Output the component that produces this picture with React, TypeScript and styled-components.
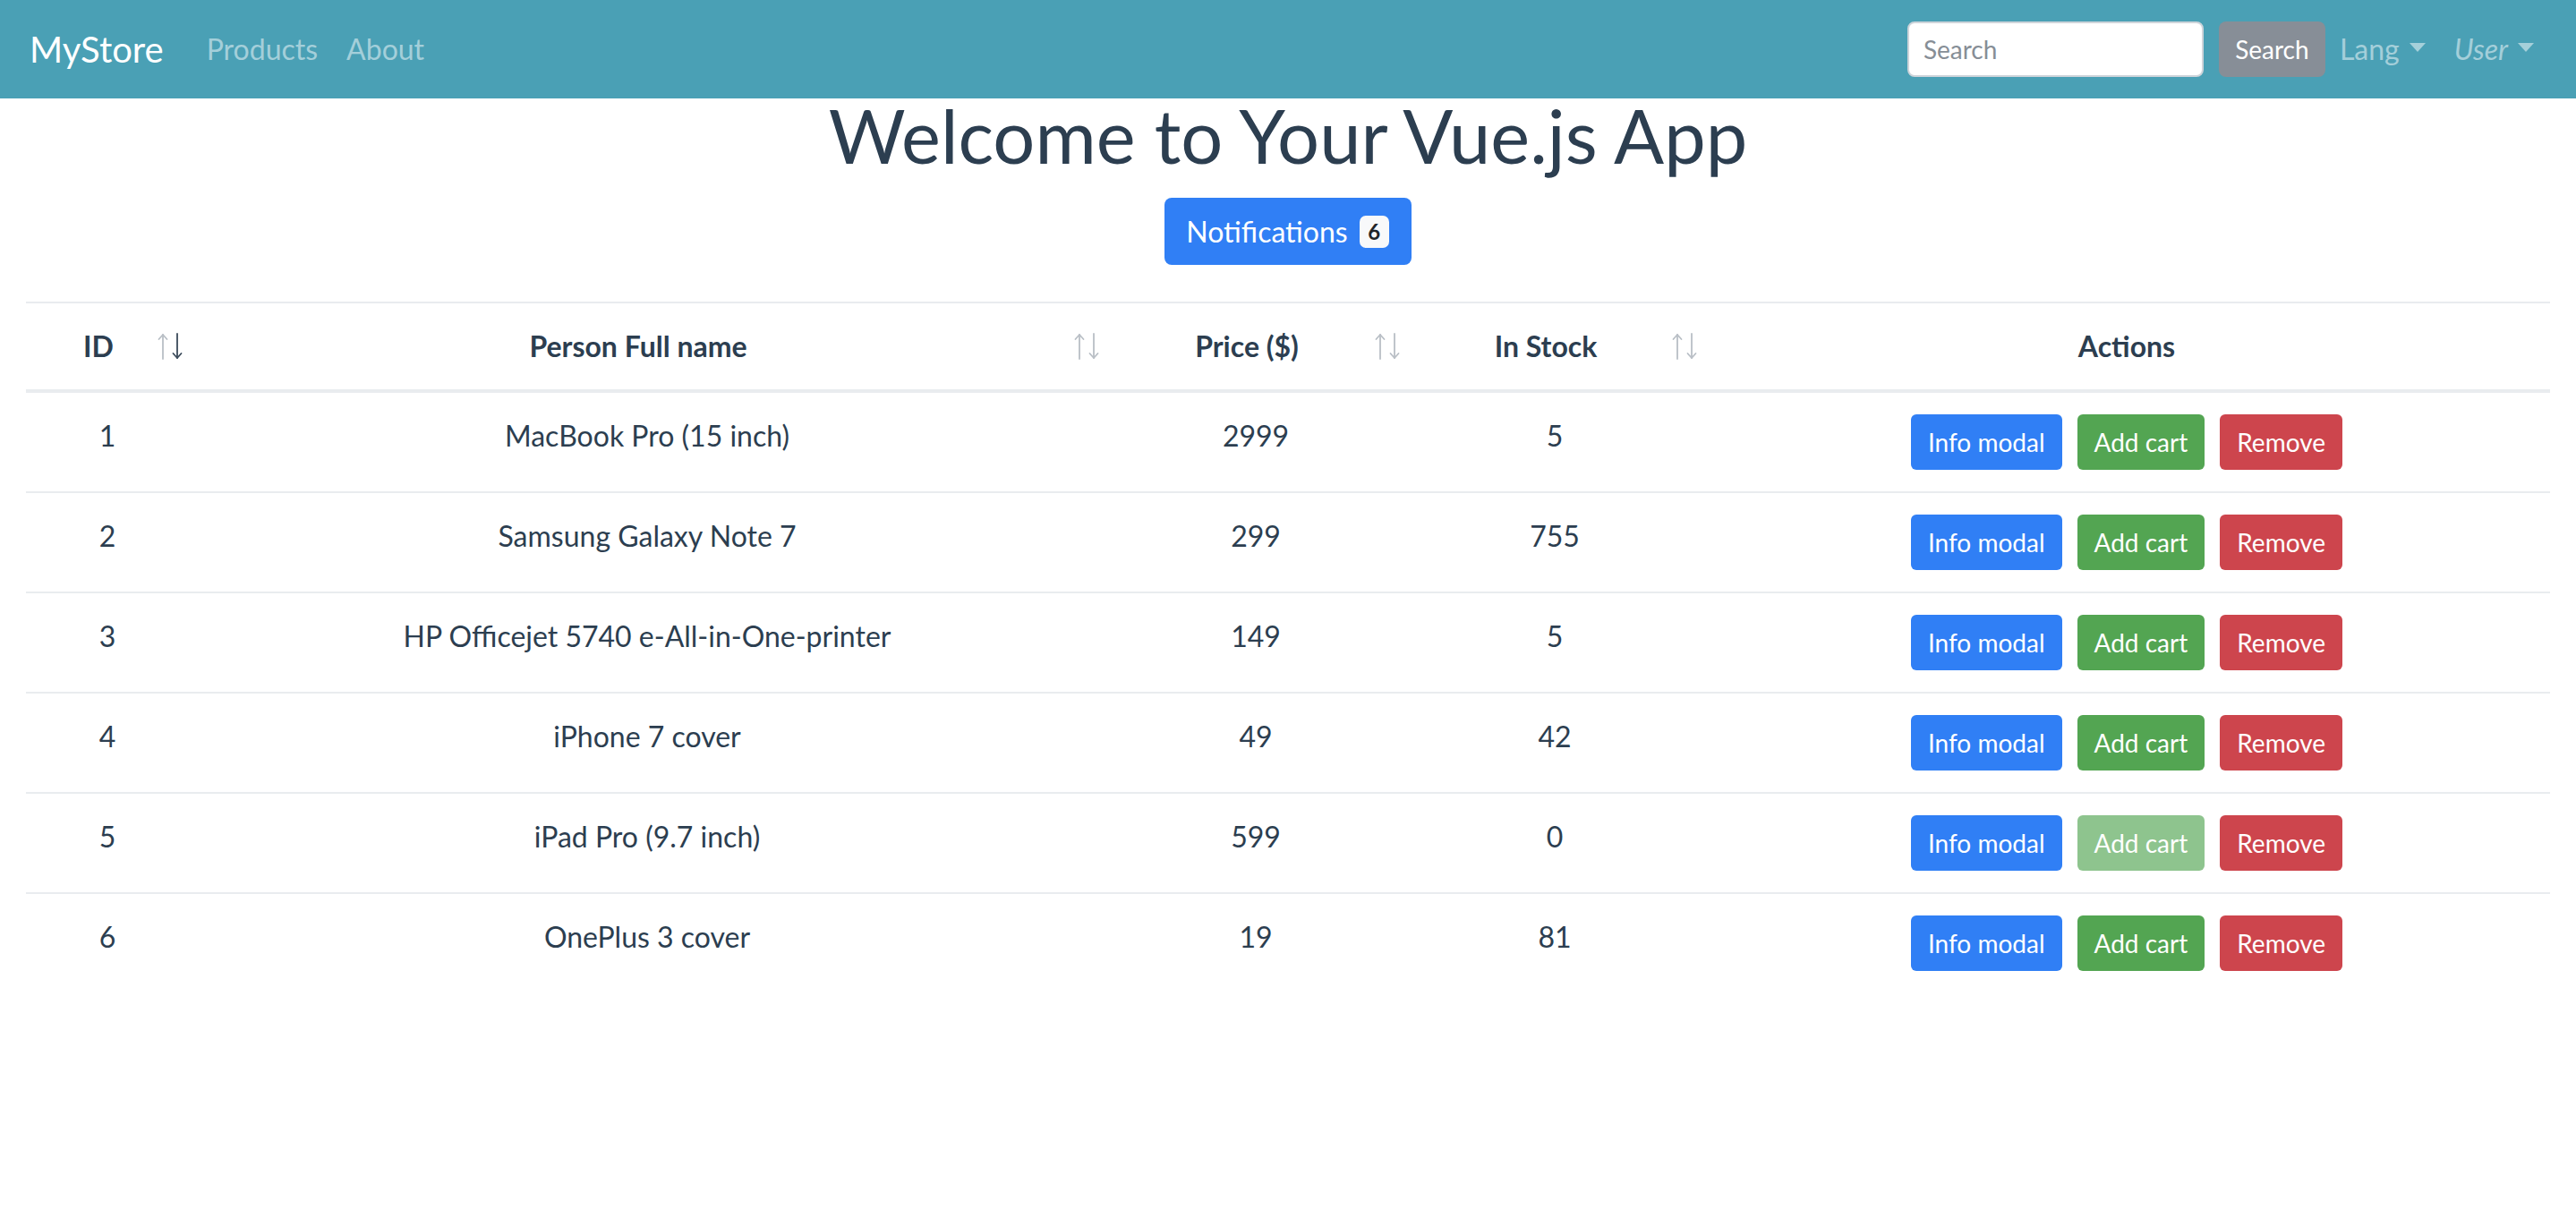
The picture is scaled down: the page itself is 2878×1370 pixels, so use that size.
import React from "react";
import styled, { createGlobalStyle } from "styled-components";

const GlobalStyle = createGlobalStyle`
  html, body { margin: 0; padding: 0; background: #ffffff; }
  body {
    font-family: "Lato", "Noto Sans", "Liberation Sans", sans-serif;
    font-size: 32px;
    line-height: 1.5;
    color: #2c3e50;
    -webkit-font-smoothing: antialiased;
  }
  * { box-sizing: border-box; }
`;

const NavBar = styled.nav`
  height: 110px;
  background: #4aa0b5;
  display: flex;
  align-items: center;
  padding: 0 31px 0 33px;
`;

const Brand = styled.a`
  font-size: 40px;
  line-height: 1.5;
  color: #ffffff;
  text-decoration: none;
  margin-right: 32px;
`;

const NavLink = styled.a<{ $italic?: boolean }>`
  padding: 0 16px;
  font-size: 32px;
  color: rgba(255, 255, 255, 0.5);
  text-decoration: none;
  font-style: ${(p) => (p.$italic ? "italic" : "normal")};
  display: flex;
  align-items: center;
`;

const Caret = styled.span`
  display: inline-block;
  margin-left: 11px;
  width: 0;
  height: 0;
  border-top: 10px solid rgba(255, 255, 255, 0.5);
  border-left: 9.5px solid transparent;
  border-right: 9.5px solid transparent;
  position: relative;
  top: -2px;
`;

const Spacer = styled.div`
  flex: 1;
`;

const SearchForm = styled.form`
  display: flex;
  align-items: center;
  gap: 17px;
  margin-right: 0;
`;

const SearchInput = styled.input`
  width: 331px;
  height: 62px;
  border: 2px solid #ced4da;
  border-radius: 8px;
  padding: 0 16px;
  font-family: inherit;
  font-size: 28px;
  color: #495057;
  background: #fff;
  outline: none;
  &::placeholder { color: #868e96; }
`;

const Btn = styled.button<{ $variant: "primary" | "success" | "danger" | "secondary"; $disabled?: boolean }>`
  font-family: inherit;
  border: none;
  color: #fff;
  cursor: pointer;
  background: ${(p) =>
    p.$variant === "primary"
      ? "#307ff5"
      : p.$variant === "success"
      ? "#53a552"
      : p.$variant === "danger"
      ? "#cd454d"
      : "#878e97"};
  opacity: ${(p) => (p.$disabled ? 0.65 : 1)};
`;

const SearchButton = styled(Btn)`
  width: 119px;
  height: 62px;
  border-radius: 8px;
  font-size: 28px;
  padding: 0 16px;
  line-height: 1;
`;

const Main = styled.main`
  padding: 0 29px;
  display: flex;
  flex-direction: column;
  align-items: center;
`;

const Title = styled.h1`
  margin: 0;
  font-size: 83px;
  font-weight: 400;
  line-height: 1;
  text-align: center;
  color: #2c3e50;
`;

const NotifButton = styled(Btn)`
  margin-top: 28px;
  height: 75px;
  padding: 0 25px 0 24px;
  border-radius: 8px;
  font-size: 32px;
  display: flex;
  align-items: center;
  gap: 13px;
`;

const Badge = styled.span`
  background: #f8f9fa;
  color: #212529;
  font-size: 24px;
  font-weight: 700;
  width: 33px;
  height: 36px;
  border-radius: 7px;
  display: flex;
  align-items: center;
  justify-content: center;
`;

const Table = styled.table`
  margin-top: 41px;
  width: 100%;
  table-layout: fixed;
  border-collapse: collapse;
`;

const HeadCell = styled.th<{ $sortable?: boolean }>`
  border-top: 2px solid #e9ecef;
  border-bottom: 4px solid #e9ecef;
  padding: ${(p) => (p.$sortable ? "24px 7px 24px 24px" : "24px")};
  font-weight: 700;
  text-align: center;
  vertical-align: middle;
  line-height: 48px;
`;

const HeadInner = styled.div`
  display: flex;
  align-items: center;
`;

const HeadLabel = styled.span`
  flex: 1;
  text-align: center;
  white-space: nowrap;
`;

const SortIconWrap = styled.span`
  width: 28px;
  height: 30px;
  margin-left: 9px;
  display: flex;
`;

const Cell = styled.td`
  border-top: 2px solid #e9ecef;
  padding: 24px;
  text-align: center;
  vertical-align: top;
  line-height: 48px;
  height: 110px;
  white-space: nowrap;
`;

const Actions = styled.div`
  display: flex;
  justify-content: center;
  gap: 17px;
`;

const SmallBtn = styled(Btn)`
  height: 62px;
  padding: 0 19px;
  border-radius: 6px;
  font-size: 28px;
  line-height: 1;
`;

const SortIcon: React.FC<{ active?: boolean }> = ({ active }) => (
  <svg width="28" height="30" viewBox="0 0 28 30" fill="none">
    <g stroke="#b9bfc6" strokeWidth="1.8" strokeLinecap="round" strokeLinejoin="round">
      <path d="M6 29V2" />
      <path d="M1.5 7L6 2l4.5 5" />
    </g>
    <g stroke={active ? "#3a4a5a" : "#b9bfc6"} strokeWidth="1.8" strokeLinecap="round" strokeLinejoin="round">
      <path d="M22 1v27" />
      <path d="M17.5 23L22 28l4.5-5" />
    </g>
  </svg>
);

const products = [
  { id: 1, name: "MacBook Pro (15 inch)", price: 2999, stock: 5 },
  { id: 2, name: "Samsung Galaxy Note 7", price: 299, stock: 755 },
  { id: 3, name: "HP Officejet 5740 e-All-in-One-printer", price: 149, stock: 5 },
  { id: 4, name: "iPhone 7 cover", price: 49, stock: 42 },
  { id: 5, name: "iPad Pro (9.7 inch)", price: 599, stock: 0 },
  { id: 6, name: "OnePlus 3 cover", price: 19, stock: 81 },
];

const columns = [
  { label: "ID", width: 182, sortable: true, active: true },
  { label: "Person Full name", width: 1024, sortable: true },
  { label: "Price ($)", width: 336, sortable: true },
  { label: "In Stock", width: 332, sortable: true },
  { label: "Actions", width: 946, sortable: false },
];

export default function App() {
  return (
    <>
      <GlobalStyle />
      <NavBar>
        <Brand>MyStore</Brand>
        <NavLink>Products</NavLink>
        <NavLink>About</NavLink>
        <Spacer />
        <SearchForm onSubmit={(e) => e.preventDefault()}>
          <SearchInput placeholder="Search" />
          <SearchButton $variant="secondary" type="button">Search</SearchButton>
        </SearchForm>
        <NavLink>
          Lang
          <Caret />
        </NavLink>
        <NavLink $italic>
          User
          <Caret />
        </NavLink>
      </NavBar>
      <Main>
        <Title>Welcome to Your Vue.js App</Title>
        <NotifButton $variant="primary">
          Notifications <Badge>6</Badge>
        </NotifButton>
        <Table>
          <colgroup>
            {columns.map((c) => (
              <col key={c.label} style={{ width: c.width }} />
            ))}
          </colgroup>
          <thead>
            <tr>
              {columns.map((c) => (
                <HeadCell key={c.label} $sortable={c.sortable}>
                  {c.sortable ? (
                    <HeadInner>
                      <HeadLabel>{c.label}</HeadLabel>
                      <SortIconWrap>
                        <SortIcon active={c.active} />
                      </SortIconWrap>
                    </HeadInner>
                  ) : (
                    c.label
                  )}
                </HeadCell>
              ))}
            </tr>
          </thead>
          <tbody>
            {products.map((p) => (
              <tr key={p.id}>
                <Cell>{p.id}</Cell>
                <Cell>{p.name}</Cell>
                <Cell>{p.price}</Cell>
                <Cell>{p.stock}</Cell>
                <Cell>
                  <Actions>
                    <SmallBtn $variant="primary">Info modal</SmallBtn>
                    <SmallBtn $variant="success" $disabled={p.stock === 0}>
                      Add cart
                    </SmallBtn>
                    <SmallBtn $variant="danger">Remove</SmallBtn>
                  </Actions>
                </Cell>
              </tr>
            ))}
          </tbody>
        </Table>
      </Main>
    </>
  );
}
